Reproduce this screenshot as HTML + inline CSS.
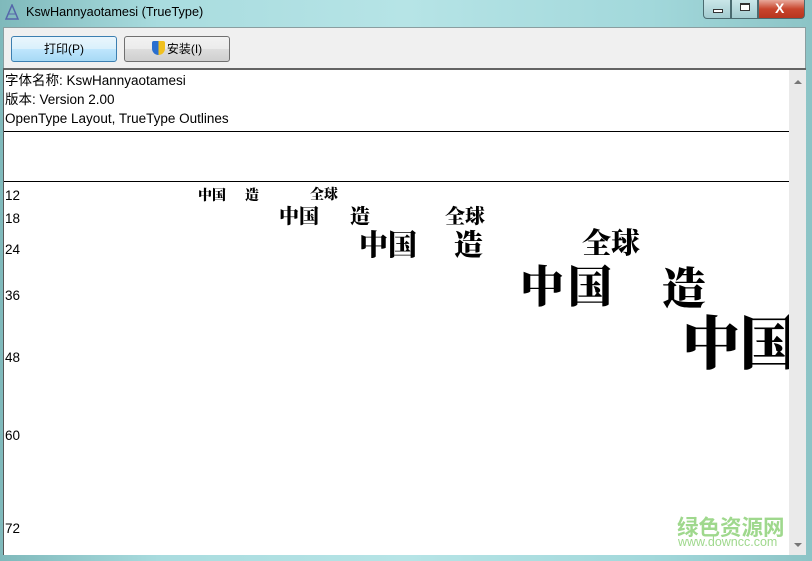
<!DOCTYPE html>
<html><head><meta charset="utf-8"><style>
*{margin:0;padding:0;box-sizing:border-box}
body{width:812px;height:561px;overflow:hidden;background:linear-gradient(90deg,#7fb9bb,#a9dcdf 20%,#b6e4e6 50%,#a2d8db 80%,#8cc4c6);font-family:"Liberation Sans","Noto Sans CJK SC",sans-serif;position:relative}
.t{position:absolute;left:26px;top:5px;font-size:12.7px;color:#000}
.tb{position:absolute;left:3px;top:27px;width:803px;height:42px;background:#f0f0f0;border:1px solid #8a9ea0;border-bottom:none}
.btn{position:absolute;top:8px;height:26px;border:1px solid #707070;border-radius:3px;background:linear-gradient(#f2f2f2,#ebebeb 50%,#dddddd 51%,#cfcfcf);font-size:12px;text-align:center;line-height:24px}
.content{position:absolute;left:3px;top:68px;width:803px;height:487px;background:#fff;border-top:2px solid #646464;border-left:1px solid #555;overflow:hidden}
.sb{position:absolute;right:0;top:0;width:17px;height:100%;background:#eaeaea;z-index:5}
.info{position:absolute;left:1px;font-size:13.5px;line-height:16px;color:#000}
.hl{position:absolute;left:0;width:785px;height:1px;background:#000}
.lab{position:absolute;left:1px;font-size:13.5px}
.c{position:absolute;font-family:"Noto Serif CJK SC",serif;font-weight:900;line-height:1;color:#000}
.ctrl{position:absolute;top:0;height:19px;border:1px solid #4a6b70;border-top:none}
.wm{position:absolute;color:#8fd27a;opacity:.85;z-index:6}
</style></head><body>
<svg style="position:absolute;left:4px;top:4px" width="16" height="16"><path d="M8 1L2 15h12z" fill="none" stroke="#5566aa" stroke-width="1.5"/><path d="M4 10h8" stroke="#5566aa"/></svg>
<div class="t">KswHannyaotamesi (TrueType)</div>
<div class="ctrl" style="left:703px;width:28px;border-radius:0 0 0 4px;background:linear-gradient(#c9e6e8,#a3ccd0)"><div style="position:absolute;left:9px;top:9px;width:10px;height:4px;border:1px solid #333;background:#fff"></div></div>
<div class="ctrl" style="left:731px;width:27px;background:linear-gradient(#c9e6e8,#a3ccd0)"><div style="position:absolute;left:8px;top:3px;width:10px;height:8px;border:1px solid #333;border-top-width:2px;background:#fff"></div></div>
<div class="ctrl" style="left:758px;width:47px;border-radius:0 0 4px 0;background:linear-gradient(#e8a89a,#c8452d 50%,#b8351f)"><div style="position:absolute;left:16px;top:0px;color:#fff;font-weight:bold;font-size:14px">X</div></div>
<div class="tb">
<div class="btn" style="left:7px;width:106px;border-color:#3c7fb1;background:linear-gradient(#eaf6fd,#d9f0fc 50%,#bee6fd 51%,#a7d9f5)">打印(P)</div>
<div class="btn" style="left:120px;width:106px"><span style="display:inline-block;width:13px;height:14px;background:linear-gradient(90deg,#2a6fd0 50%,#f0c020 50%);border-radius:2px 2px 7px 7px;vertical-align:-2px;margin-right:2px"></span>安装(I)</div>
</div>
<div class="content">
<div class="sb"><div style="position:absolute;left:5px;top:10px;border:4px solid transparent;border-bottom:4px solid #777;border-top:none"></div><div style="position:absolute;left:5px;bottom:8px;border:4px solid transparent;border-top:4px solid #777;border-bottom:none"></div></div>
<div class="info" style="top:3px">字体名称: KswHannyaotamesi</div>
<div class="info" style="top:22px">版本: Version 2.00</div>
<div class="info" style="top:41px">OpenType Layout, TrueType Outlines</div>
<div class="hl" style="top:61px"></div>
<div class="hl" style="top:111px"></div>
<div class="lab" style="top:118px">12</div>
<div class="lab" style="top:141px">18</div>
<div class="lab" style="top:172px">24</div>
<div class="lab" style="top:218px">36</div>
<div class="lab" style="top:280px">48</div>
<div class="lab" style="top:358px">60</div>
<div class="lab" style="top:451px">72</div>
<div class="c" style="left:194px;top:118px;font-size:14px">中国</div>
<div class="c" style="left:241px;top:118px;font-size:14px">造</div>
<div class="c" style="left:306px;top:117px;font-size:14px">全球</div>
<div class="c" style="left:275px;top:135px;font-size:20px">中国</div>
<div class="c" style="left:346px;top:135px;font-size:20px">造</div>
<div class="c" style="left:441px;top:135px;font-size:20px">全球</div>
<div class="c" style="left:355px;top:159px;font-size:29px">中国</div>
<div class="c" style="left:450px;top:159px;font-size:29px">造</div>
<div class="c" style="left:578px;top:157px;font-size:29px">全球</div>
<div class="c" style="left:516px;top:191px;font-size:44px;letter-spacing:4px">中国</div>
<div class="c" style="left:658px;top:193px;font-size:44px">造</div>
<div class="c" style="left:678px;top:240px;font-size:58px">中国</div>
<div class="wm" style="left:673px;top:441px;font-size:21.5px;font-weight:bold;font-family:'Noto Sans CJK SC',sans-serif">绿色资源网</div>
<div class="wm" style="left:674px;top:465px;font-size:12.5px">www.downcc.com</div>
</div>
</body></html>
